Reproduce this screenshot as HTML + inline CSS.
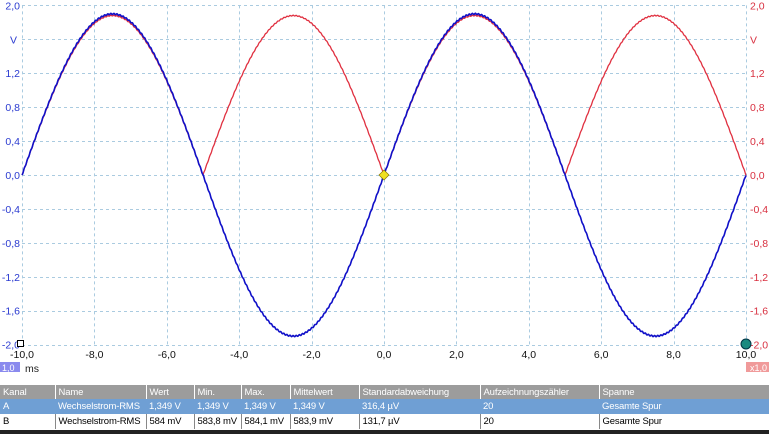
<!DOCTYPE html>
<html><head><meta charset="utf-8"><style>
body{margin:0;width:769px;height:434px;overflow:hidden;background:#fff;font-family:"Liberation Sans",sans-serif;}
svg{position:absolute;left:0;top:0}
table{position:absolute;left:0;top:385px;width:769px;border-collapse:collapse;font-size:9.5px;letter-spacing:-0.15px;table-layout:fixed}
td{height:14px;padding:0 0 0 3px;white-space:nowrap;overflow:hidden;border-left:1px solid #fff}
tr.h td{background:#9c9c9c;color:#fff;height:14px}
tr.a td{background:#6f9fd4;color:#fff;height:15px;border-left:none}
tr.b td{background:#fff;color:#000;height:15px;border-left:1px solid #888;border-bottom:1px solid #fff}
tr.a td:first-child,tr.b td:first-child,tr.h td:first-child{border-left:none}
.bot{position:absolute;left:0;top:430px;width:769px;height:4px;background:#222}
</style></head><body>
<svg width="769" height="385" id="s" font-family="Liberation Sans, sans-serif" font-size="10.5">
<g stroke="#aacbe0" stroke-dasharray="3,3" stroke-width="1" id="grid"></g>
<g id="lab"></g>
<path id="r" fill="none" stroke="#e03040" stroke-width="1.3"/>
<path id="b" fill="none" stroke="#1010c8" stroke-width="1.6"/>
<polygon points="384,170 389,175 384,180 379,175" fill="#f0e020" stroke="#887700" stroke-width="0.7"/>
<rect x="17.5" y="340.5" width="6" height="6" fill="#fff" stroke="#000"/>
<circle cx="746" cy="344" r="5" fill="#1a8a80" stroke="#034"/>
<rect x="0" y="362" width="20" height="10" fill="#8a8aee"/>
<text x="2" y="371" fill="#fff" font-size="9">1,0</text>
<text x="25" y="372" fill="#222">ms</text>
<rect x="746" y="362" width="23" height="10" fill="#f09a9a"/>
<text x="750" y="371" fill="#fff" font-size="9">x1,0</text>
</svg>
<table>
<colgroup><col style="width:55px"><col style="width:91px"><col style="width:48px"><col style="width:47px"><col style="width:49px"><col style="width:69px"><col style="width:121px"><col style="width:119px"><col style="width:170px"></colgroup>
<tr class="h"><td>Kanal</td><td>Name</td><td>Wert</td><td>Min.</td><td>Max.</td><td>Mittelwert</td><td>Standardabweichung</td><td>Aufzeichnungszähler</td><td>Spanne</td></tr>
<tr class="a"><td>A</td><td>Wechselstrom-RMS</td><td>1,349 V</td><td>1,349 V</td><td>1,349 V</td><td>1,349 V</td><td>316,4 µV</td><td>20</td><td>Gesamte Spur</td></tr>
<tr class="b"><td>B</td><td>Wechselstrom-RMS</td><td>584 mV</td><td>583,8 mV</td><td>584,1 mV</td><td>583,9 mV</td><td>131,7 µV</td><td>20</td><td>Gesamte Spur</td></tr>
</table>
<div class="bot"></div>
<script>
var NS="http://www.w3.org/2000/svg";
var L=22,R=746,Y0=175,K=84.8;
function X(t){return L+(t+10)*(R-L)/20}
function Y(v){return Y0-v*K}
var g=document.getElementById('grid'),lab=document.getElementById('lab');
function el(p,n,a){var e=document.createElementNS(NS,n);for(var k in a)e.setAttribute(k,a[k]);p.appendChild(e);return e}
for(var v=-2;v<=2.001;v+=0.4){var y=Math.round(Y(v))+0.5;el(g,'line',{x1:L,x2:R,y1:y,y2:y});}
for(var t=-10;t<=10;t+=2){var x=Math.round(X(t))+0.5;el(g,'line',{x1:x,x2:x,y1:Y(2),y2:Y(-2)});}
var vals=[2,1.2,0.8,0.4,0,-0.4,-0.8,-1.2,-1.6,-2];
vals.forEach(function(v){var s=v.toFixed(1).replace('.',',');if(s=='-0,0')s='0,0';var y=Y(v)+4;
el(lab,'text',{x:20,y:y,fill:'#2a3ad0','text-anchor':'end'}).textContent=s;
el(lab,'text',{x:750,y:y,fill:'#d83040'}).textContent=s;});
el(lab,'text',{x:17,y:Y(1.6)+4,fill:'#2a3ad0','text-anchor':'end'}).textContent='V';
el(lab,'text',{x:750,y:Y(1.6)+4,fill:'#d83040'}).textContent='V';
for(var t=-10;t<=10;t+=2){el(lab,'text',{x:X(t),y:358,fill:'#111','text-anchor':'middle'}).textContent=t.toFixed(1).replace('.',',');}
var pb='',pr='';
for(var i=0;i<=1448;i++){var t=-10+i*20/1448;var s=Math.sin(2*Math.PI*t/10);var n=(Math.sin(i*7.3)*0.6);
pb+=(i?'L':'M')+X(t).toFixed(2)+' '+(Y(1.9*s)+n).toFixed(2);
pr+=(i?'L':'M')+X(t).toFixed(2)+' '+(Y(1.88*Math.abs(s))+n*0.7).toFixed(2);}
document.getElementById('b').setAttribute('d',pb);
document.getElementById('r').setAttribute('d',pr);
</script>
</body></html>
